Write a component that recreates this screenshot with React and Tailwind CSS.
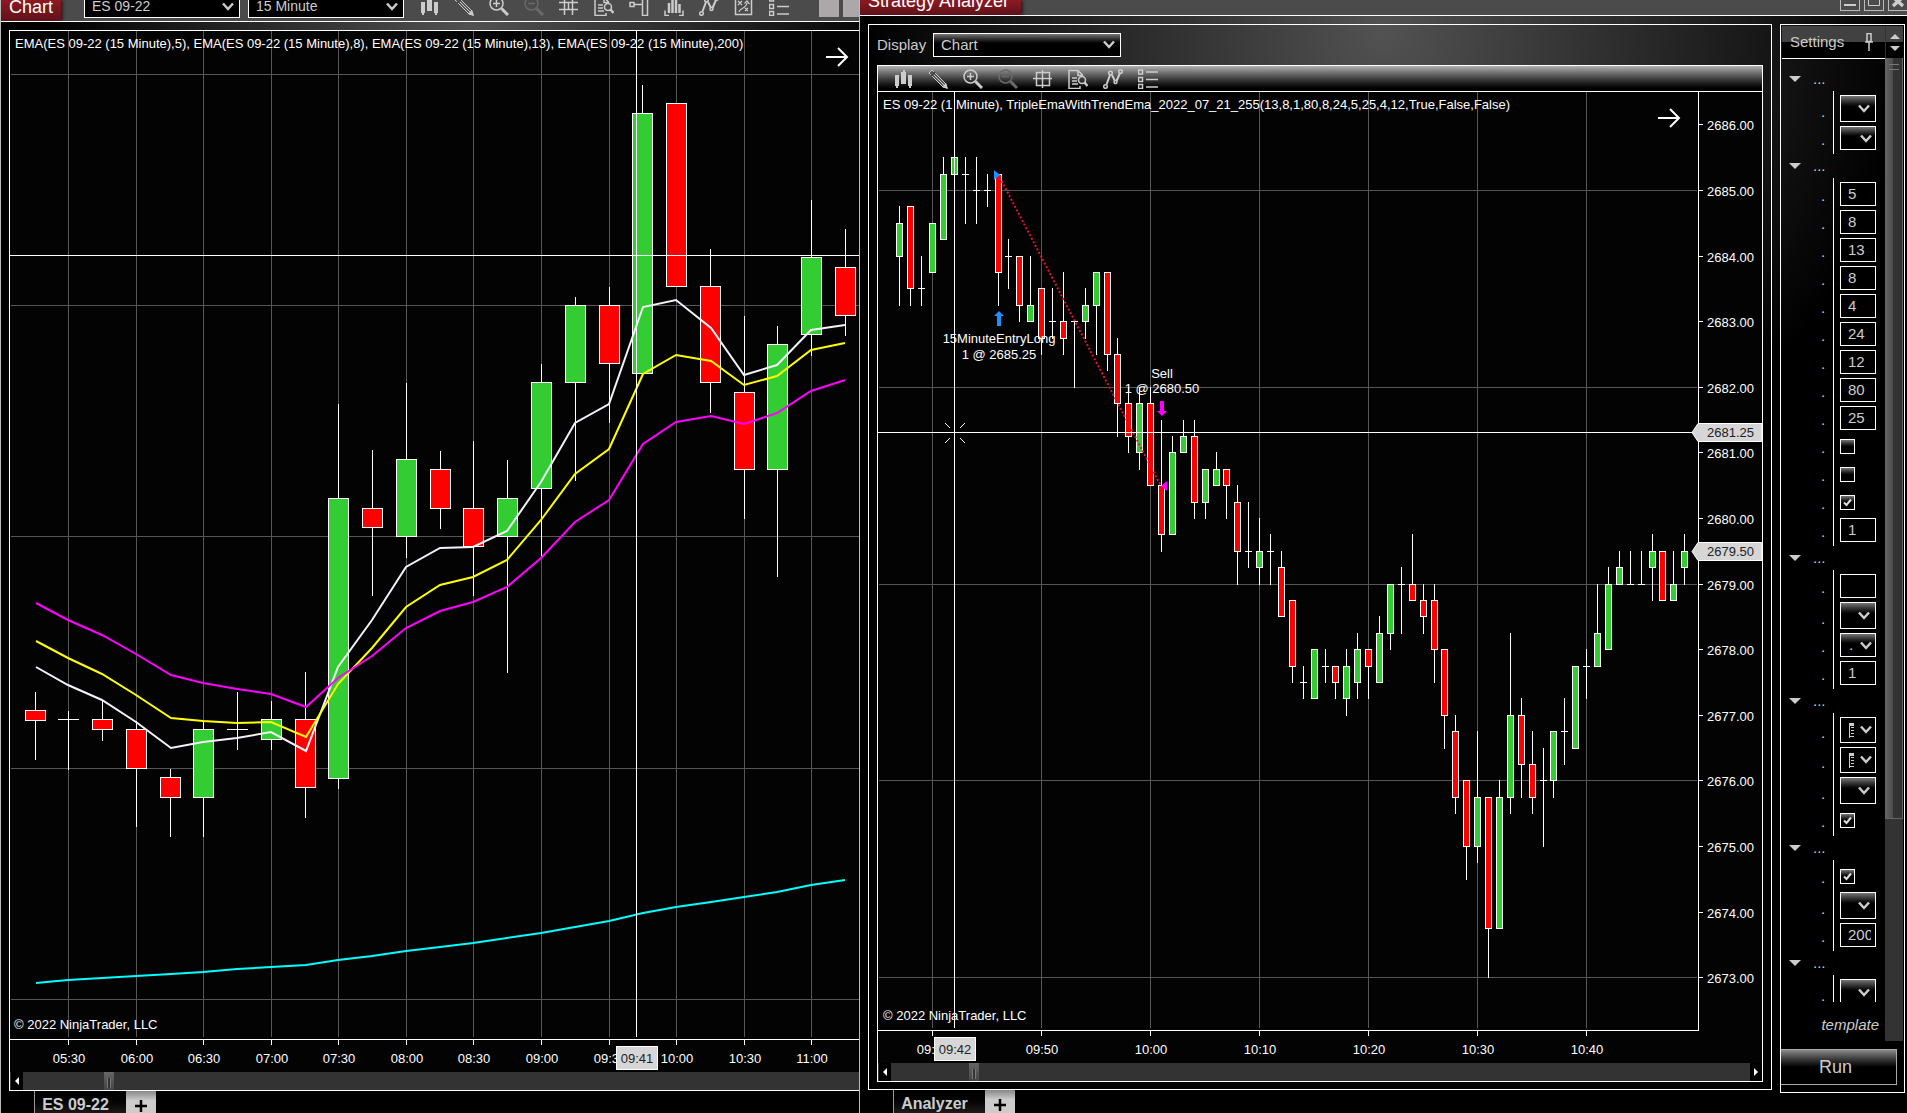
import React from "react";

const GREEN = "#33cc33";
const RED = "#ff0000";

/* x, high, body top, body bottom, low, direction */
const EMA_CANDLES = [
  [35, 692, 710, 720, 759, "r"], [68, 711, 719, 719, 769, "d"], [102, 701, 719, 729, 740, "r"],
  [136, 721, 729, 768, 826, "r"], [170, 769, 777, 797, 836, "r"], [203, 722, 729, 797, 836, "g"],
  [237, 692, 729, 729, 749, "d"], [271, 701, 719, 739, 749, "g"], [305, 672, 719, 787, 817, "r"],
  [338, 404, 498, 778, 788, "g"], [372, 450, 508, 527, 595, "r"], [406, 383, 459, 536, 557, "g"],
  [440, 451, 469, 508, 528, "r"], [473, 441, 508, 546, 595, "r"], [507, 460, 498, 536, 672, "g"],
  [541, 364, 382, 488, 557, "g"], [575, 297, 305, 382, 480, "g"], [609, 287, 305, 363, 422, "r"],
  [642, 85, 113, 373, 373, "g"], [676, 103, 103, 286, 286, "r"], [710, 249, 286, 382, 412, "r"],
  [744, 316, 392, 469, 518, "r"], [777, 326, 344, 469, 576, "g"], [811, 200, 257, 334, 355, "g"],
  [845, 229, 267, 315, 335, "r"],
];

const EMA_X = [36, 68, 102, 136, 171, 203, 237, 271, 306, 338, 372, 406, 440, 473, 507, 541, 575, 609, 643, 676, 711, 744, 777, 811, 845];
const EMA_LINES = [
  ["#f2f2fa", [667, 685, 700, 722, 748, 742, 738, 732, 751, 667, 620, 567, 548, 547, 531, 482, 423, 404, 307, 300, 328, 375, 365, 330, 325]],
  ["#ffff00", [641, 658, 674, 695, 718, 721, 723, 722, 737, 684, 648, 607, 585, 577, 560, 520, 474, 449, 374, 355, 361, 385, 376, 350, 343]],
  ["#ff00ff", [603, 620, 635, 654, 675, 683, 689, 694, 707, 678, 656, 628, 611, 602, 587, 558, 522, 500, 444, 422, 416, 424, 413, 391, 380]],
  ["#00ffff", [983, 980, 978, 976, 974, 972, 969, 967, 965, 960, 956, 951, 947, 943, 938, 933, 927, 921, 913, 907, 902, 897, 892, 885, 880]],
];
const EMA_TIMES = [
  [68, "05:30"], [136, "06:00"], [203, "06:30"], [271, "07:00"], [338, "07:30"], [406, "08:00"],
  [473, "08:30"], [541, "09:00"], [609, "09:30"], [676, "10:00"], [744, "10:30"], [811, "11:00"],
];

/* high, body top, body bottom, low in quarter points below 2685, direction */
const MINUTE_CANDLES = [
  [1, 2, 4, 7, "g"], [1, 1, 6, 7, "r"], [4, 6, 6, 7, "d"], [2, 2, 5, 5, "g"], [-2, -1, 3, 3, "g"],
  [-2, -2, -1, -1, "g"], [-2, -1, -1, 2, "d"], [-2, 0, 0, 2, "d"], [-1, 0, 0, 1, "d"], [-1, -1, 5, 7, "r"],
  [3, 4, 4, 6, "d"], [4, 4, 7, 8, "r"], [4, 7, 8, 8, "g"], [6, 6, 9, 10, "r"], [6, 8, 8, 9, "d"],
  [5, 8, 9, 10, "r"], [8, 8, 8, 12, "d"], [6, 7, 8, 9, "g"], [5, 5, 7, 10, "g"], [5, 5, 10, 11, "r"],
  [9, 10, 13, 15, "r"], [12, 13, 15, 16, "r"], [12, 13, 16, 17, "g"], [12, 13, 18, 18, "r"], [14, 18, 21, 22, "r"],
  [15, 16, 21, 21, "g"], [14, 15, 16, 16, "g"], [14, 15, 19, 20, "r"], [17, 17, 19, 20, "g"], [16, 17, 18, 18, "g"],
  [17, 17, 18, 20, "r"], [18, 19, 22, 24, "r"], [19, 22, 22, 23, "d"], [20, 22, 23, 24, "g"], [21, 22, 22, 24, "d"],
  [22, 23, 26, 26, "r"], [25, 25, 29, 30, "r"], [29, 30, 30, 31, "d"], [28, 28, 31, 31, "g"], [28, 29, 29, 30, "d"],
  [29, 29, 30, 31, "r"], [28, 29, 31, 32, "g"], [27, 28, 30, 31, "g"], [28, 28, 29, 31, "r"], [26, 27, 30, 30, "g"],
  [24, 24, 27, 28, "g"], [23, 24, 24, 27, "d"], [21, 24, 25, 25, "r"], [24, 25, 26, 27, "r"], [24, 25, 28, 30, "r"],
  [28, 28, 32, 34, "r"], [32, 33, 37, 38, "r"], [36, 36, 40, 42, "r"], [33, 37, 40, 41, "g"], [37, 37, 45, 48, "r"],
  [36, 37, 45, 45, "g"], [27, 32, 37, 38, "g"], [31, 32, 35, 37, "r"], [33, 35, 37, 38, "r"], [34, 36, 36, 40, "d"],
  [33, 33, 36, 37, "g"], [31, 33, 33, 35, "d"], [29, 29, 34, 34, "g"], [28, 29, 29, 31, "d"], [24, 27, 29, 29, "g"],
  [23, 24, 28, 28, "g"], [22, 23, 24, 24, "g"], [22, 24, 24, 24, "d"], [22, 24, 24, 24, "d"], [21, 22, 23, 25, "g"],
  [22, 22, 25, 25, "r"], [22, 24, 25, 25, "g"], [21, 22, 23, 24, "g"],
];
const quarterY = (q) => Math.round(190 + q * 16.4);
const minuteX = (i) => Math.floor(899.9 + i * 10.9);
const MINUTE_TIMES = [
  [932, "09:40"], [1041, "09:50"], [1150, "10:00"], [1259, "10:10"], [1368, "10:20"], [1477, "10:30"], [1586, "10:40"],
];
const PRICES = [2686, 2685, 2684, 2683, 2682, 2681, 2680, 2679, 2678, 2677, 2676, 2675, 2674, 2673];

function Candle({ x, high, top, bottom, low, dir, half }) {
  return (
    <g shapeRendering="crispEdges">
      <rect x={x} y={high} width="1" height={low - high + 1} fill="#fff" />
      {dir === "d" ? (
        <rect x={x - half} y={top} width={half * 2 + 1} height="1" fill="#fff" />
      ) : (
        <rect x={x - half + 0.5} y={top + 0.5} width={half * 2} height={bottom - top} fill={dir === "g" ? GREEN : RED} stroke="#fff" />
      )}
    </g>
  );
}

function VLine({ x, y1, y2, color = "#565656" }) {
  return <rect x={x} y={y1} width="1" height={y2 - y1} fill={color} shapeRendering="crispEdges" />;
}
function HLine({ y, x1, x2, color = "#565656" }) {
  return <rect x={x1} y={y} width={x2 - x1} height="1" fill={color} shapeRendering="crispEdges" />;
}
function GoArrow({ x, y }) {
  return <path d={`M${x} ${y}h20M${x + 12} ${y - 9}l9 9l-9 9`} fill="none" stroke="#fff" strokeWidth="2" />;
}
function TimeTag({ x, y, children }) {
  return (
    <g>
      <rect x={x + 0.5} y={y + 0.5} width="41" height="23" fill="#d6d6d6" stroke="#fff" />
      <text x={x + 21} y={y + 17} textAnchor="middle" fill="#222">{children}</text>
    </g>
  );
}
function PriceTag({ y, children }) {
  return (
    <g>
      <path d={`M1692 ${y + 0.5}l6 -9h64v18h-64z`} fill="#d6d6d6" stroke="#fff" />
      <text x="1707" y={y + 5} fill="#222">{children}</text>
    </g>
  );
}

function EmaChart() {
  return (
    <svg className="block min-h-0 w-full flex-1 bg-[#030303] font-['Liberation_Sans',Arial,sans-serif] text-[13px]" fill="#fff" role="img" aria-label="ES 09-22 15 minute chart">
      <g transform="translate(-10 -31)">
        {EMA_TIMES.map(([x]) => <VLine key={x} x={x} y1={31} y2={1037} />)}
        {[74, 305, 536, 768, 999].map((y) => <HLine key={y} y={y} x1={11} x2={2000} />)}
        {EMA_CANDLES.map(([x, high, top, bottom, low, dir]) => (
          <Candle key={x} x={x} high={high} top={top} bottom={bottom} low={low} dir={dir} half={10} />
        ))}
        {EMA_LINES.map(([color, ys]) => (
          <polyline key={color} fill="none" stroke={color} strokeWidth="2" points={ys.map((y, i) => `${EMA_X[i]},${y}`).join(" ")} />
        ))}
        <VLine x={636} y1={31} y2={1037} color="#fff" />
        <HLine y={255} x1={10} x2={2000} color="#fff" />
        <text x="15" y="48">EMA(ES 09-22 (15 Minute),5), EMA(ES 09-22 (15 Minute),8), EMA(ES 09-22 (15 Minute),13), EMA(ES 09-22 (15 Minute),200)</text>
        <GoArrow x={826} y={57} />
        <text x="14" y="1029">© 2022 NinjaTrader, LLC</text>
        <HLine y={1039} x1={10} x2={2000} color="#fff" />
        {EMA_TIMES.map(([x, label]) => (
          <g key={x}>
            <VLine x={x} y1={1040} y2={1045} color="#fff" />
            <text x={x + 1} y="1063" textAnchor="middle">{label}</text>
          </g>
        ))}
        <TimeTag x={616} y={1046}>09:41</TimeTag>
      </g>
    </svg>
  );
}

function MinuteChart() {
  return (
    <svg className="block min-h-0 w-full flex-1 bg-[#030303] font-['Liberation_Sans',Arial,sans-serif] text-[13px]" fill="#fff" role="img" aria-label="ES 09-22 1 minute strategy chart">
      <g transform="translate(-878 -92)">
        {MINUTE_TIMES.map(([x]) => <VLine key={x} x={x} y1={92} y2={1028} />)}
        {[190, 387, 584, 780, 977].map((y) => <HLine key={y} y={y} x1={879} x2={1697} />)}
        <text x="883" y="109">ES 09-22 (1 Minute), TripleEmaWithTrendEma_2022_07_21_255(13,8,1,80,8,24,5,25,4,12,True,False,False)</text>
        {MINUTE_CANDLES.map(([h, t, b, l, dir], i) => (
          <Candle key={i} x={minuteX(i)} high={quarterY(h)} top={quarterY(t)} bottom={quarterY(b)} low={quarterY(l)} dir={dir} half={3} />
        ))}
        <path d="M998 174L1161 486" stroke="#dc143c" strokeWidth="2" strokeDasharray="2 2" />
        <path d="M994 170l6 5l-6 5z" fill="#1e90ff" />
        <path d="M1167 481l-6 5l6 5z" fill="#ff00ff" />
        <path d="M999 311l5 5h-3v10h-4v-10h-3z" fill="#1e90ff" />
        <path d="M1162 416l5 -5h-3v-10h-4v10h-3z" fill="#ff00ff" />
        <g textAnchor="middle">
          <text x="999" y="343">15MinuteEntryLong</text>
          <text x="999" y="359">1 @ 2685.25</text>
          <text x="1162" y="378">Sell</text>
          <text x="1162" y="393">1 @ 2680.50</text>
        </g>
        <VLine x={954} y1={92} y2={1028} color="#fff" />
        <HLine y={432} x1={878} x2={1698} color="#fff" />
        <path d="M945 423l5 5M965 423l-5 5M945 443l5 -5M965 443l-5 -5" stroke="#fff" fill="none" />
        <GoArrow x={1658} y={118} />
        <text x="883" y="1020">© 2022 NinjaTrader, LLC</text>
        <HLine y={1030} x1={878} x2={1699} color="#fff" />
        <VLine x={1698} y1={92} y2={1031} color="#fff" />
        {MINUTE_TIMES.map(([x, label]) => (
          <g key={x}>
            <VLine x={x} y1={1031} y2={1036} color="#fff" />
            <text x={x + 1} y="1054" textAnchor="middle">{label}</text>
          </g>
        ))}
        {PRICES.map((p) => {
          const y = quarterY((2685 - p) * 4);
          return (
            <g key={p}>
              <HLine y={y} x1={1699} x2={1703} color="#fff" />
              <text x="1707" y={y + 6}>{p.toFixed(2)}</text>
            </g>
          );
        })}
        <TimeTag x={934} y={1037}>09:42</TimeTag>
        <PriceTag y={432}>2681.25</PriceTag>
        <PriceTag y={551}>2679.50</PriceTag>
      </g>
    </svg>
  );
}

const ICONS = {
  candles: <g fill="#ccc" stroke="none"><path d="M2 6h4v11h-1v2h-2v-2h-1zM8 3h2v-2h2v2h1v12h-5zM15 6h4v11h-1v2h-2v-2h-1z" /></g>,
  pencil: <g><path d="M1 4L4 1L18 15L19 19L15 18Z" fill="#555" strokeWidth="1" /><path d="M4 4L16 16M2.500 5.500L14.500 17.500M6 3L18 15" strokeWidth="1" /><path d="M14 18L18 14L20 20Z" fill="#ccc" stroke="none" /><path d="M3 7L7 3" stroke="#444" strokeWidth="2" /></g>,
  zoomIn: <g><circle cx="7.5" cy="7.500" r="6.500" /><path d="M4 7.500h7M7.500 4v7" strokeWidth="1.500" /><path d="M12.500 12.500L19 19" strokeWidth="3" /></g>,
  zoomOut: <g stroke="#6a6a6a"><circle cx="7.500" cy="7.500" r="6.500" /><path d="M4 7.500h7" /><path d="M12.500 12.500L19 19" strokeWidth="3" /></g>,
  crosshair: <path d="M3.500 3.500h13v13h-13zM0 9.500h19M9.500 1v18" />,
  grid: <path d="M5.500 0v19M13.500 0v19M0 6.500h19M0 13.500h19M9.500 6v8" />,
  search: <g><path d="M12 17v2.500h-11v-18h9l5 5M10 1.500v5h5" /><path d="M4 9h5M4 12h5M4 15h6" /><circle cx="14" cy="11" r="3.500" /><path d="M16.500 13.500L19.500 17" strokeWidth="2.500" /></g>,
  panel: <path d="M1 6.500h4v4h-4zM5 8.500h8M13.500 1v18.500h5v-19" />,
  histogram: <g><path d="M5 19.500h-4v-5M15 19.500h4v-5" /><path d="M5 7v10M8.500 4v13M12 2v15M15.500 8v9" strokeWidth="2.500" /></g>,
  zigzag: <g><path d="M3.500 15.500L7 6M9 6L12 12M13.500 12L17 4" strokeWidth="2" /><circle cx="2.500" cy="17.500" r="1.800" /><circle cx="7.500" cy="4" r="1.800" /><circle cx="12.500" cy="13" r="1.500" /><circle cx="17.500" cy="2.500" r="1.800" /></g>,
  plan: <g><path d="M1.500 0.500h16v18h-16z" /><path d="M4 5l4 4M8 5l-4 4M11 12l3 3M14 12l-3 3M5 16c0-4 7-3 8-9M10.500 7.500L13 5l2.500 3" strokeWidth="1.200" /></g>,
  list: <path d="M0.500 1h4v4h-4zM0.500 8.500h4v4h-4zM0.500 15.500h4v4h-4zM8 3h12M8 10.500h12M8 18h12" />,
};

function ToolButton({ name, label }) {
  return (
    <button type="button" aria-label={label} className="h-5 w-5 shrink-0">
      <svg viewBox="0 0 20 20" className="block h-5 w-5" fill="none" stroke="#ccc" strokeWidth="1.500">{ICONS[name]}</svg>
    </button>
  );
}

function Chevron({ className }) {
  return (
    <svg viewBox="0 0 12 9" className={"pointer-events-none absolute h-[9px] w-3 " + className} fill="none" stroke="#ccc" strokeWidth="2.500">
      <path d="M1 1.500L6 7L11 1.500" />
    </svg>
  );
}

/* The chart window sits partly above the screen, so its bar shows the lower part of each box only. */
function CutSelect({ label, value }) {
  return (
    <div className="relative w-[156px] shrink-0">
      <select aria-label={label} className="block h-[18px] w-full appearance-none border border-t-0 border-white bg-black pb-1 pl-[7px] text-sm leading-[13px] text-[#ccc] outline-none">
        <option>{value}</option>
      </select>
      <Chevron className="right-1.5 top-0.5" />
    </div>
  );
}

function TitleTab({ children, className }) {
  return (
    <div className={"flex shrink-0 items-end self-stretch bg-linear-to-b from-[#8e1a22] to-[#5e1219] px-2 pb-1 text-lg leading-5 text-white shadow-[2px_0_3px_#222] " + className}>{children}</div>
  );
}

function Scrollbar({ right }) {
  return (
    <div className="flex h-[18px] shrink-0 items-stretch bg-[#333] pl-px">
      <button type="button" aria-label="Scroll left" className="flex w-3 items-center justify-center bg-black">
        <svg viewBox="0 0 4 8" className="h-2 w-1"><path d="M4 0v8L0 4z" fill="#fff" /></svg>
      </button>
      <div className={"flex " + (right ? "w-[78px]" : "w-[81px]")} />
      <div className="flex w-2.5 items-end justify-center bg-linear-to-b from-[#666] to-[#444]">
        <div className="mb-0.5 h-2.5 w-1 border-x border-[#777] bg-[#333]" />
      </div>
      {right && (
        <button type="button" aria-label="Scroll right" className="ml-auto flex w-3 items-center justify-center bg-black">
          <svg viewBox="0 0 4 8" className="h-2 w-1"><path d="M0 0v8L4 4z" fill="#fff" /></svg>
        </button>
      )}
    </div>
  );
}

function SheetTabs({ label }) {
  return (
    <div className="flex h-[23px] shrink-0 overflow-hidden pl-[25px]">
      <button type="button" className="flex h-8 w-[92px] justify-center border-l border-[#999] bg-linear-to-b from-black to-[#333] pr-2.5 pt-1 text-base font-bold leading-5 text-[#ccc]">{label}</button>
      <button type="button" aria-label="Add tab" className="flex h-8 w-[30px] justify-center bg-linear-to-b from-[#888] to-[#ccc] to-30% pt-2">
        <svg viewBox="0 0 14 14" className="h-3.5 w-3.5"><path d="M7 1v12M1 7h12" stroke="#000" strokeWidth="2.500" /></svg>
      </button>
    </div>
  );
}

function ChartWindow() {
  return (
    <section className="flex min-w-0 flex-[858] flex-col border-x border-[#bbb] bg-black bg-[radial-gradient(50%_45%_at_55%_3%,#525252,#000)]">
      <header className="flex h-[22px] shrink-0 items-end overflow-hidden border-b border-white bg-[#4b4b4b]">
        <TitleTab className="w-[60px]">Chart</TitleTab>
        <div className="mb-[3px] ml-[23px] flex items-end">
          <div className="flex gap-2">
            <CutSelect label="Instrument" value="ES 09-22" />
            <CutSelect label="Interval" value="15 Minute" />
          </div>
          <div className="mb-0.5 ml-[15px] flex gap-[15px]">
            <ToolButton name="candles" label="Chart style" />
            <ToolButton name="pencil" label="Drawing tools" />
            <ToolButton name="zoomIn" label="Zoom in" />
            <ToolButton name="zoomOut" label="Zoom out" />
            <ToolButton name="grid" label="Crosshair" />
            <ToolButton name="search" label="Data box" />
            <ToolButton name="panel" label="Chart trader" />
            <ToolButton name="histogram" label="Data series" />
            <ToolButton name="zigzag" label="Indicators" />
            <ToolButton name="plan" label="Strategies" />
            <ToolButton name="list" label="Properties" />
          </div>
          <div className="mb-px ml-[30px] flex gap-1">
            <button type="button" aria-label="Link instrument" className="h-5 w-5 bg-[#aca8aa]" />
            <button type="button" aria-label="Link interval" className="h-5 w-5 bg-[#aca8aa]" />
          </div>
        </div>
      </header>
      <div className="flex min-h-0 flex-1 flex-col pt-2">
        <div className="ml-2 flex min-h-0 flex-1 flex-col border-y border-l border-white">
          <EmaChart />
          <Scrollbar />
        </div>
        <div className="-mb-px pl-2"><SheetTabs label="ES 09-22" /></div>
      </div>
    </section>
  );
}

const GROUPS = [
  [["select", 27], ["select", 24]],
  [["text", "5"], ["text", "8"], ["text", "13"], ["text", "8"], ["text", "4"], ["text", "24"], ["text", "12"], ["text", "80"], ["text", "25"], ["check", false], ["check", false], ["check", true], ["text", "1"]],
  [["text", ""], ["select", 27], ["select", 24, "."], ["text", "1"]],
  [["ruler"], ["ruler"], ["select", 27], ["check", true]],
  [["check", true], ["select", 27], ["text", "200"]],
  [["select", 27]],
];

function SettingControl({ kind, value, extra, label }) {
  if (kind === "text") {
    return <input type="text" aria-label={label} defaultValue={value} className="block h-6 w-9 border border-white bg-black pb-0.5 pl-[7px] pr-1 text-[15px] text-[#ccc] outline-none" />;
  }
  if (kind === "check") {
    return (
      <div className="relative flex h-6 w-9 items-center">
        <input type="checkbox" aria-label={label} defaultChecked={value} className="peer block h-[15px] w-[15px] appearance-none border border-white bg-linear-to-b from-[#777] to-black to-60%" />
        <svg viewBox="0 0 9 9" className="pointer-events-none absolute left-[3px] hidden h-[9px] w-[9px] peer-checked:block"><path d="M1 4.500L3.500 7L8 1.500" fill="none" stroke="#ddd" strokeWidth="2" /></svg>
      </div>
    );
  }
  if (kind === "ruler") {
    return (
      <div className="relative h-[26px] w-9">
        <select aria-label={label} className="block h-full w-full appearance-none border border-white bg-black" />
        <svg viewBox="0 0 5 15" className="pointer-events-none absolute left-[9px] top-1.5 h-[15px] w-[5px]"><path d="M0 0h5v3h-5zM0 3h1v12h-1zM2 4h3v1h-3zM2 7h3v1h-3zM2 10h3v1h-3zM1 13h4v1h-4z" fill="#ccc" /></svg>
        <Chevron className="right-1 top-2" />
      </div>
    );
  }
  return (
    <div className={"relative w-9 " + (value === 27 ? "h-[27px]" : "h-6")}>
      <select aria-label={label} className="block h-full w-full appearance-none border border-white bg-linear-to-b from-[#777] to-black to-50% pl-2 text-[15px] text-[#ccc]">
        <option>{extra || ""}</option>
      </select>
      <Chevron className={value === 27 ? "right-1.5 top-[9px]" : "right-1 top-2"} />
    </div>
  );
}

function SettingsPanel() {
  return (
    <aside className="mb-5 flex w-[125px] shrink-0 flex-col border border-white">
      <div className="flex min-h-0 flex-1 p-px pb-0">
        <div className="flex min-w-0 flex-1 flex-col">
          <div className="flex h-[33px] shrink-0 items-center justify-between border-b border-white bg-linear-to-b from-[#414141] from-50% to-black to-50% pl-2 pr-3 text-[15px] text-[#ccc]">
            <span>Settings</span>
            <button type="button" aria-label="Pin">
              <svg viewBox="0 0 8 18" className="h-[18px] w-2" fill="none" stroke="#ccc"><path d="M2 .5h4v8h-4zM0 9h8" strokeWidth="1.500" /><path d="M4 9v9" strokeWidth="1.500" /></svg>
            </button>
          </div>
          <div className="min-h-0 flex-1 overflow-hidden pt-2">
            {GROUPS.map((rows, g) => (
              <div key={g}>
                <button type="button" aria-label={`Group ${g + 1}`} className="flex h-6 items-center pl-[7px]">
                  <svg viewBox="0 0 12 6" className="h-1.5 w-3"><path d="M0 0h12L6 6z" fill="#ccc" /></svg>
                  <span className="pl-3 text-[15px] leading-6 text-[#ccc]">...</span>
                </button>
                <div className="ml-[39px] flex">
                  <div className="flex w-3 flex-col gap-1 py-1">
                    {rows.map(([kind, value], r) => (
                      <span key={r} className={"flex items-end text-[15px] leading-5 text-[#ccc] " + (kind === "ruler" ? "h-[26px]" : value === 27 ? "h-[27px]" : "h-6")}>.</span>
                    ))}
                  </div>
                  <div className="flex flex-col gap-1 border-l border-white py-1 pl-1.5">
                    {rows.map(([kind, value, extra], r) => (
                      <SettingControl key={r} kind={kind} value={value} extra={extra} label={`Setting ${g + 1}.${r + 1}`} />
                    ))}
                  </div>
                </div>
              </div>
            ))}
          </div>
          <a href="#template" className="flex h-[39px] shrink-0 items-center justify-end pr-1.5 pt-2 text-[15px] italic text-[#ccc]">template</a>
        </div>
        <div className="flex w-[18px] shrink-0 flex-col bg-[#333]">
          <div className="flex h-8 flex-col items-center justify-around border-l border-[#333] bg-linear-to-b from-[#414141] from-50% to-black to-50% py-1">
            <button type="button" aria-label="Scroll up"><svg viewBox="0 0 10 5" className="h-[5px] w-2.5"><path d="M0 5h10L5 0z" fill="#ccc" /></svg></button>
            <button type="button" aria-label="Scroll down"><svg viewBox="0 0 10 5" className="h-[5px] w-2.5"><path d="M0 0h10L5 5z" fill="#ccc" /></svg></button>
          </div>
          <div className="flex h-3/4 items-start justify-center border-b border-r border-[#666] bg-linear-to-r from-[#666] via-[#4a4a4a] via-50% to-[#333] to-50% pt-1.5">
            <div className="h-1.5 w-2.5 border-y border-[#777]" />
          </div>
        </div>
      </div>
      <button type="button" className="mb-[7px] mr-[7px] mt-2 h-9 shrink-0 border border-l-0 border-[#aaa] bg-linear-to-b from-[#8a8a8a] to-black to-60% pr-1.5 text-lg leading-8 text-[#ccc]">Run</button>
    </aside>
  );
}

function AnalyzerWindow() {
  return (
    <section className="flex min-w-0 flex-[1047] flex-col bg-black bg-[radial-gradient(50%_45%_at_50%_3%,#525252,#000)]">
      <header className="flex h-4 shrink-0 items-end overflow-hidden border-b border-white bg-[#4b4b4b]">
        <TitleTab className="w-[161px] whitespace-nowrap">Strategy Analyzer</TitleTab>
        <div className="-mr-px mb-1 ml-auto flex gap-1">
          <button type="button" aria-label="Minimize" className="h-5 w-5 border border-[#bbb]">
            <svg viewBox="0 0 18 18" className="block"><path d="M3 13h12" stroke="#ccc" strokeWidth="2" /></svg>
          </button>
          <button type="button" aria-label="Maximize" className="h-5 w-5 border border-[#bbb]">
            <svg viewBox="0 0 18 18" className="block"><path d="M3.500 3.500h11v10h-11z" fill="none" stroke="#ccc" /></svg>
          </button>
          <button type="button" aria-label="Close" className="h-5 w-5 border border-[#bbb]">
            <svg viewBox="0 0 18 18" className="block"><path d="M4 5l10 9M14 5l-10 9" stroke="#ccc" strokeWidth="3.500" /></svg>
          </button>
        </div>
      </header>
      <div className="flex min-h-0 flex-1 gap-2 pl-2 pr-0.5 pt-2">
        <div className="flex min-w-0 flex-1 flex-col">
          <div className="flex min-h-0 flex-1 flex-col gap-2 border border-white p-2 pb-[7px]">
            <div className="flex shrink-0 items-center gap-2 text-[15px] text-[#ccc]">
              <label htmlFor="display" className="w-12">Display</label>
              <div className="relative h-6 w-[188px] shrink-0">
                <select id="display" className="block h-full w-full appearance-none border border-white bg-linear-to-b from-[#777] to-black to-50% pl-[7px] text-[#ccc] outline-none">
                  <option>Chart</option>
                </select>
                <Chevron className="right-1.5 top-[7px]" />
              </div>
            </div>
            <div className="flex min-h-0 flex-1 flex-col border border-white bg-[#030303]">
              <div className="flex h-[26px] shrink-0 items-center gap-[15px] border-b border-white bg-linear-to-b from-[#b0b0b0] to-black pl-[15px]">
                <ToolButton name="candles" label="Chart style" />
                <ToolButton name="pencil" label="Drawing tools" />
                <ToolButton name="zoomIn" label="Zoom in" />
                <ToolButton name="zoomOut" label="Zoom out" />
                <ToolButton name="crosshair" label="Crosshair" />
                <ToolButton name="search" label="Data box" />
                <ToolButton name="zigzag" label="Indicators" />
                <ToolButton name="list" label="Properties" />
              </div>
              <MinuteChart />
              <Scrollbar right />
            </div>
          </div>
          <SheetTabs label="Analyzer" />
        </div>
        <SettingsPanel />
      </div>
    </section>
  );
}

export default function App() {
  return (
    <main className="flex h-screen w-full overflow-hidden bg-black font-['Liberation_Sans',Arial,sans-serif]">
      <ChartWindow />
      <AnalyzerWindow />
    </main>
  );
}
